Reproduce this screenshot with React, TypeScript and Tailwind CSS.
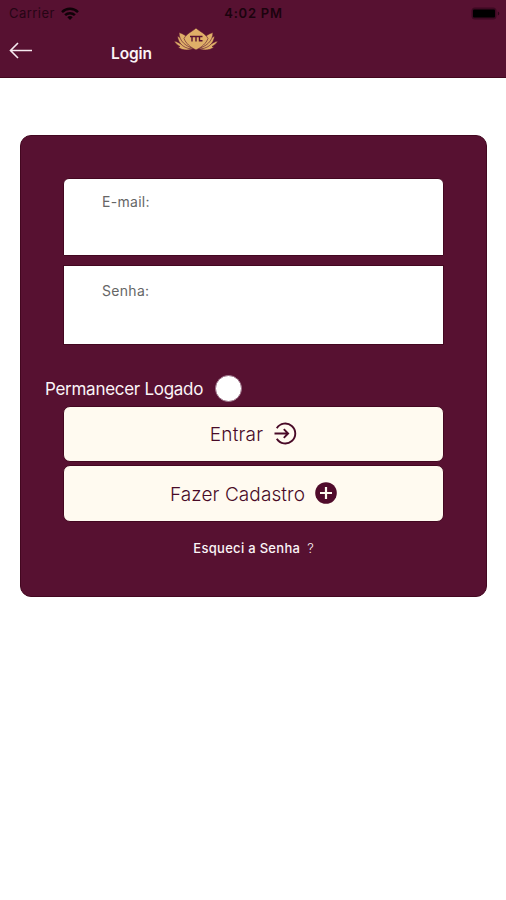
import React from "react";

function WifiIcon() {
  return (
    <svg className="ml-[6px] h-[13px] w-[18px]" viewBox="0 0 18 13" fill="none" stroke="#100208" strokeWidth="2.5">
      <path d="M1 5.1C5.5.7 12.5.7 17 5.1" />
      <path d="M4.1 8.2c2.8-2.7 7-2.7 9.8 0" />
      <path d="M6.3 10.2c1.5-1.5 3.9-1.5 5.4 0L9 13z" fill="#100208" stroke="none" />
    </svg>
  );
}

function BatteryIcon() {
  return (
    <svg className="h-[13px] w-[29px]" viewBox="0 0 29 13">
      <rect x="0.5" y="0.5" width="25" height="12" rx="3.5" fill="#3d0922" />
      <rect x="2" y="2.5" width="22" height="8" rx="1" fill="#000" />
      <path d="M26.8 4.5c2 .7 2 3.3 0 4z" fill="#2c0618" />
    </svg>
  );
}

function LotusLogo() {
  return (
    <svg className="h-[23px] w-[44px]" viewBox="0 0 44 23">
      <g fill="#dfaf68" stroke="#571131" strokeWidth="0.6">
        <path d="M0 13c6 1 9 6 19 8-6 2-12 1-15-2l2-.5C3.500 17.500 1.500 15.500 0 13z" />
        <path d="M44 13c-6 1-9 6-19 8 6 2 12 1 15-2l-2-.5c2.500-1 4.500-3 6-5.500z" />
        <path d="M3.500 8c5 2 8 9 17 13C11 21.500 4 16 3.500 8z" />
        <path d="M40.500 8c-5 2-8 9-17 13 9.500.5 16.500-5 17-13z" />
        <path d="M5 4.500c8 2 11 8 16.500 16.500C12 19 5 13 5 4.500z" />
        <path d="M39 4.500c-8 2-11 8-16.500 16.500C32 19 39 13 39 4.500z" />
        <path d="M22 0c3.500 3.500 9 5 12 10.500-2 5-6 8.500-12 11.500-6-3-10-6.500-12-11.500C13 5 18.500 3.500 22 0z" />
      </g>
      <path d="M16 8.500h12.500M18 8.500v5M22 8.500v5M25.500 8.500v4.200h3" fill="none" stroke="#571131" strokeWidth="1.400" />
    </svg>
  );
}

function EnterIcon() {
  return (
    <svg className="mb-[2px] h-[23px] w-[23px]" viewBox="0 0 23 23" fill="none" stroke="#490a27" strokeWidth="1.900">
      <path d="M2.800 6.200A10 10 0 1 1 2.800 16.800" />
      <path d="M0.500 11.500h13.500M9.800 7.200l4.300 4.300-4.300 4.300" />
    </svg>
  );
}

function PlusIcon() {
  return (
    <svg className="mb-px h-[22px] w-[22px]" viewBox="0 0 22 22">
      <circle cx="11" cy="11" r="10.800" fill="#500b2b" />
      <path d="M11 5v12M5 11h12" stroke="#fffaf0" strokeWidth="2.200" />
    </svg>
  );
}

export default function App() {
  return (
    <div className="h-[900px] w-[506px] overflow-hidden bg-white font-['Inter','Liberation_Sans',sans-serif]">
      <header className="h-[78px] border-b border-[#42071d] bg-[#571131]">
        <div className="grid h-[26px] grid-cols-3 items-center pr-[6px] pl-[9px] text-[13px] text-[#260515]">
          <div className="flex items-center">
            <span className="pt-[2px] tracking-[0.45px]">Carrier</span>
            <WifiIcon />
          </div>
          <span className="pt-[2px] pr-[2px] text-center font-semibold tracking-[0.75px] text-[#1b030e]">4:02 PM</span>
          <div className="flex justify-end">
            <BatteryIcon />
          </div>
        </div>
        <div className="flex h-[51px] items-start pl-[9px]">
          <svg className="mt-[16px] h-[17px] w-[23px]" viewBox="0 0 23 17" fill="none" stroke="#f6eaf0" strokeWidth="1.600">
            <path d="M23 8.500H1.500M9 1L1.500 8.500 9 16" />
          </svg>
          <h1 className="mt-[16px] ml-[79px] w-[42px] text-[15.5px] leading-6 font-semibold tracking-[-0.1px] text-[#faf3f6]">Login</h1>
          <div className="mt-[2px] ml-[21px]">
            <LotusLogo />
          </div>
        </div>
      </header>

      <main className="mt-[57px] mr-[19px] ml-5 h-[462px] rounded-[11px] border border-[#430720] bg-[#571131] px-[42px] pt-[42px]">
        <div className="h-[78px] rounded-t-[6px] border border-[#430720] bg-white pt-[11px] pl-[38px] text-[14px] leading-6 tracking-[0.3px] text-[#666]">
          E-mail:
        </div>
        <div className="mt-[9px] h-[80px] border border-[#430720] bg-white pt-[13px] pl-[38px] text-[14px] leading-6 tracking-[0.3px] text-[#666]">
          Senha:
        </div>
        <div className="-ml-[18px] flex h-[60px] items-center pt-[27px] text-[17px] text-[#fbf4f7]">
          <span className="w-[170px] pt-[2px] tracking-[-0.28px] whitespace-nowrap">Permanecer Logado</span>
          <span className="h-[27px] w-[27px] rounded-full border border-[#9b7187] bg-white" />
        </div>
        <button className="mt-px flex h-[56px] w-full items-center justify-center gap-[11px] rounded-[7px] border border-[#430720] bg-[#fffaf0] text-[19px] font-light tracking-[0.2px] text-[#490a27]">
          <span className="pt-[3px]">Entrar</span>
          <EnterIcon />
        </button>
        <button className="mt-[3px] flex h-[57px] w-full items-center justify-center gap-[10px] rounded-[7px] border border-[#430720] bg-[#fffaf0] text-[19px] font-light tracking-[0.1px] text-[#490a27]">
          <span className="pt-[3px]">Fazer Cadastro</span>
          <PlusIcon />
        </button>
        <div className="mt-[16px] flex justify-center gap-[7px] text-[13px] leading-5 text-[#fbf4f7]">
          <span className="font-medium tracking-[0.3px]">Esqueci a Senha</span>
          <span className="font-light">?</span>
        </div>
      </main>
    </div>
  );
}
